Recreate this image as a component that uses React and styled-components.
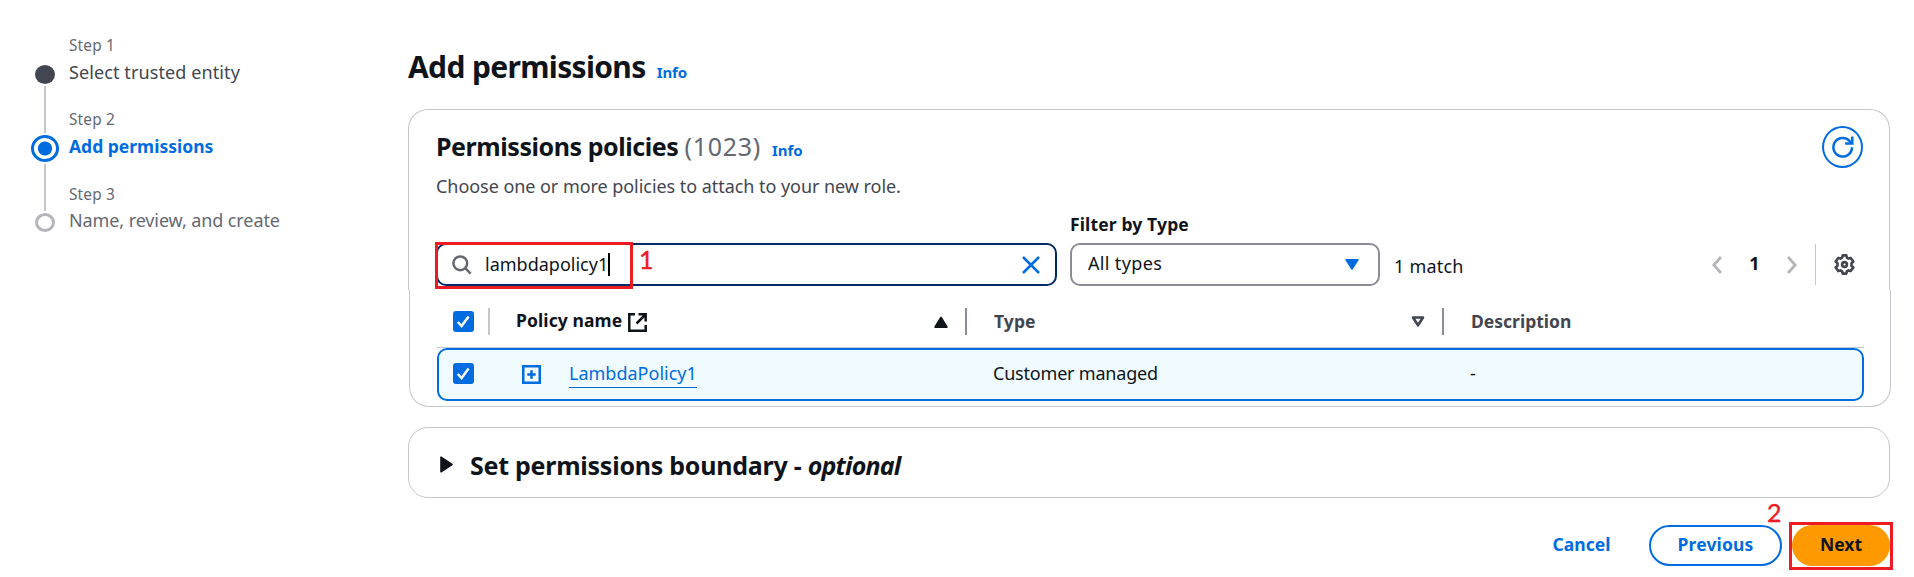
import React from 'react';
import styled, { createGlobalStyle, css } from 'styled-components';

const c = {
  text: '#0f141a',
  body: '#424650',
  muted: '#656871',
  blue: '#006ce0',
  line: '#c6c6cd',
  control: '#8c8c94',
  disabled: '#b4b4bb',
  focus: '#002b66',
  rowBg: '#f0fbff',
  orange: '#ff9900',
  mark: '#ed1c24',
};

const GlobalStyle = createGlobalStyle`
  *, *::before, *::after { box-sizing: border-box; }
  body {
    margin: 0;
    background: #fff;
    color: ${c.text};
    font: 18px/25px "Noto Sans", "Open Sans", sans-serif;
    overflow: hidden;
  }
  svg { display: block; flex: none; }
`;

const Page = styled.div`
  display: flex;
  width: 1914px;
  height: 577px;
  white-space: nowrap;
`;

/* Step navigation */
const Steps = styled.nav`
  display: flex;
  width: 408px;
  flex: none;
  padding-left: 31px;
`;
const Track = styled.div`
  display: flex;
  flex-direction: column;
  align-items: center;
  gap: 2px;
  width: 28px;
  padding-top: 65px;
`;
const Dot = styled.span`
  flex: none;
  border-radius: 50%;
  width: 20px;
  height: 19px;
  ${({ $state }) =>
    $state === 'done' && css`background: ${c.body};`}
  ${({ $state }) =>
    $state === 'todo' && css`border: 3px solid ${c.disabled};`}
  ${({ $state }) =>
    $state === 'active' &&
    css`
      width: 28px;
      height: 27px;
      border: 3px solid ${c.blue};
      background: radial-gradient(circle, ${c.blue} 6.6px, #fff 7.4px);
    `}
`;
const Connector = styled.span`
  flex: none;
  width: 2px;
  height: 47px;
  background: ${c.line};
`;
const StepList = styled.ol`
  list-style: none;
  margin: 0;
  padding: 35px 0 0 10px;
`;
const Step = styled.li`
  display: flex;
  flex-direction: column;
  gap: 2.5px;
  height: 74.4px;
`;
const StepLabel = styled.span`
  font-size: 15.4px;
  line-height: 22px;
  letter-spacing: 0.15px;
  color: ${c.muted};
`;
const StepTitle = styled.span`
  letter-spacing: ${({ $track }) => $track}px;
  color: ${({ $state }) =>
    ({ done: c.body, active: c.blue, todo: c.muted })[$state]};
  font-weight: ${({ $state }) => ($state === 'active' ? 700 : 400)};
  font-size: ${({ $state }) => ($state === 'active' ? 17.5 : 18)}px;
`;

/* Content */
const Main = styled.main`
  display: flex;
  flex-direction: column;
  width: 1482px;
  padding-top: 49px;
`;
const TitleRow = styled.header`
  display: flex;
  align-items: baseline;
  gap: 11px;
  height: 60px;
`;
const Title = styled.h1`
  margin: 0;
  font-size: 30px;
  line-height: 36px;
  letter-spacing: -0.65px;
`;
const Info = styled.a`
  font-size: 15px;
  font-weight: 700;
  line-height: 20px;
  letter-spacing: -0.1px;
  color: ${c.blue};
`;

const PanelHead = styled.section`
  display: flex;
  flex-direction: column;
  height: 181px;
  padding: 16px 25px 0 26px;
  border: 1px solid ${c.line};
  border-bottom: 0;
  border-radius: 20px 20px 0 0;
`;
const HeadRow = styled.div`
  display: flex;
  justify-content: space-between;
  height: 84px;
`;
const HeadText = styled.div`
  padding: 5px 0 0 1px;
`;
const HeadTitle = styled.div`
  display: flex;
  align-items: baseline;
  height: 43px;
`;
const SectionTitle = styled.h2`
  margin: 0;
  font-size: 25px;
  line-height: 30px;
  letter-spacing: ${({ $track }) => $track}px;
`;
const Optional = styled.em`
  letter-spacing: -0.8px;
`;
const Count = styled.span`
  margin: 0 11px 0 6px;
  font-size: 25px;
  line-height: 30px;
  letter-spacing: 0.75px;
  color: ${c.muted};
`;
const Description = styled.p`
  margin: 0;
  letter-spacing: -0.05px;
  color: ${c.body};
`;
const RefreshButton = styled.button`
  display: flex;
  align-items: center;
  justify-content: center;
  width: 41px;
  height: 42px;
  margin-right: 1px;
  padding: 0;
  border: 2px solid ${c.blue};
  border-radius: 50%;
  background: #fff;
`;

const Toolbar = styled.div`
  display: flex;
  align-items: flex-end;
  height: 76px;
  padding-left: 1px;
`;
const Control = styled.div`
  position: relative;
  display: flex;
  align-items: center;
  height: 43px;
  border: 2px solid ${({ $focused }) => ($focused ? c.focus : c.control)};
  border-radius: 10px;
  width: ${({ $focused }) => ($focused ? 621 : 310)}px;
  padding: ${({ $focused }) => ($focused ? '0 15px 0 14px' : '0 19px 0 16px')};
`;
const Query = styled.span`
  flex: 1;
  display: flex;
  align-items: center;
  margin-left: 13px;
  padding-bottom: 1px;
  &::after {
    content: '';
    width: 2px;
    height: 23px;
    background: #000;
  }
`;
const Field = styled.label`
  display: flex;
  flex-direction: column;
  gap: 6px;
  margin: 0 14px 0 13px;
`;
const FieldLabel = styled.span`
  font-size: 17.5px;
  font-weight: 700;
  letter-spacing: 0.14px;
`;
const Value = styled.span`
  flex: 1;
  letter-spacing: 0.35px;
  padding-bottom: 2px;
`;
const Matches = styled.span`
  flex: 1;
  letter-spacing: 0.2px;
  line-height: 40px;
`;
const Pager = styled.div`
  display: flex;
  align-items: center;
  height: 43px;
  padding-right: 9px;
`;
const PageNumber = styled.b`
  width: 65px;
  text-align: center;
  padding-bottom: 2px;
`;
const Rule = styled.span`
  width: 1px;
  height: 41px;
  margin: 0 18px;
  background: ${c.line};
`;

/* Callouts */
const Outline = styled.span`
  position: absolute;
  border: 3px solid ${c.mark};
  ${({ $target }) =>
    $target === 'search'
      ? css`left: -3px; top: -3px; width: 198px; height: 47px;`
      : css`inset: -3px -3px -4px;`}
`;
const Callout = styled.span`
  position: absolute;
  font: 25px/30px Lato, sans-serif;
  -webkit-text-stroke: 0.4px ${c.mark};
  color: ${c.mark};
  ${({ $target }) =>
    $target === 'search' ? css`left: 201px; top: -1px;` : css`left: -25px; top: -28px;`}
`;

/* Table */
const PanelTable = styled.section`
  height: 117px;
  margin: 0 -1px 20px 1px;
  padding: 0 26px 0 27px;
  border: 1px solid ${c.line};
  border-top: 0;
  border-radius: 0 0 20px 20px;
`;
const columns = css`
  display: grid;
  grid-template-columns: 53px 477px 477px 1fr;
  align-items: center;
`;
const HeaderRow = styled.div`
  ${columns}
  height: 58px;
  padding-top: 6px;
  border-bottom: 1px solid ${c.line};
`;
const HeaderCell = styled.div`
  display: flex;
  align-items: center;
  height: 27px;
  padding-left: ${({ $select, $sorted }) => ($select ? 16 : $sorted ? 26 : 27)}px;
  border-right: ${({ $divider }) => ($divider ? `2px solid ${$divider}` : 0)};
  color: ${({ $sorted }) => ($sorted ? c.text : c.body)};
  font-size: 17.5px;
  font-weight: 700;
`;
const HeaderLabel = styled.span`
  display: flex;
  flex: 1;
  gap: 6px;
  letter-spacing: ${({ $track }) => $track || 0}px;
  padding-bottom: ${({ $raised }) => ($raised ? 3 : 0)}px;
  & svg { margin-top: 5px; }
`;
const SortSlot = styled.span`
  padding-right: 17px;
`;
const SelectedRow = styled.div`
  ${columns}
  height: 53px;
  border: 2px solid ${c.blue};
  border-radius: 10px;
  background: ${c.rowBg};
  grid-template-columns: 51px 477px 477px 1fr;
`;
const Cell = styled.div`
  display: flex;
  align-items: center;
  height: 25px;
  margin-bottom: 3px;
  padding-left: ${({ $select }) => ($select ? 14 : 26)}px;
  letter-spacing: ${({ $tight }) => ($tight ? -0.2 : 0)}px;
`;
const ExpandSlot = styled.span`
  margin: 3px 28px 0 6px;
`;
const PolicyLink = styled.a`
  color: ${c.blue};
  height: 27px;
  margin-top: 2px;
  border-bottom: 1px solid ${c.blue};
`;

const Expander = styled.section`
  display: flex;
  align-items: center;
  gap: 17px;
  height: 71px;
  padding: 4px 0 0 31px;
  border: 1px solid ${c.line};
  border-radius: 20px;
`;

const Actions = styled.footer`
  display: flex;
  justify-content: flex-end;
  gap: 10px;
  margin-top: 27px;
`;
const Button = styled.button`
  position: relative;
  width: ${({ $width }) => $width}px;
  height: 41px;
  padding: 0 0 2px;
  border: 2px solid transparent;
  border-radius: 21px;
  background: transparent;
  color: ${c.blue};
  font: inherit;
  font-size: 17.5px;
  font-weight: 700;
  ${({ $kind }) =>
    $kind === 'normal' && css`border-color: ${c.blue}; letter-spacing: 0.15px;`}
  ${({ $kind }) =>
    $kind === 'primary' &&
    css`background: ${c.orange}; border: 0; color: ${c.text};`}
`;
const ActionSlot = styled.div`
  position: relative;
  height: 41px;
`;

const Checkbox = () => (
  <svg width="21" height="21" viewBox="0 0 21 21">
    <rect width="21" height="21" rx="3" fill={c.blue} />
    <path d="M4.8 11 8.6 15 15.6 5.4" fill="none" stroke="#fff" strokeWidth="2.5" />
  </svg>
);
const SearchIcon = () => (
  <svg width="20" height="20" viewBox="0 0 20 20" fill="none" stroke={c.muted} strokeWidth="2.5">
    <circle cx="8.3" cy="8.3" r="6.9" />
    <path d="m13.2 13.2 5.4 5.4" />
  </svg>
);
const CloseIcon = () => (
  <svg width="18" height="18" viewBox="0 0 18 18" stroke={c.blue} strokeWidth="2.5">
    <path d="m1 1 16 16M17 1 1 17" />
  </svg>
);
const RefreshIcon = () => (
  <svg width="22" height="22" viewBox="0 0 22 22" fill="none" stroke={c.blue} strokeWidth="2.5">
    <path d="M20 11.3a9.3 9.3 0 1 1-2.6-6.5L20 7.2" />
    <path d="M20.3.6v6.9h-7.2" />
  </svg>
);
const CaretDown = () => (
  <svg width="14" height="11" viewBox="0 0 14 11">
    <path d="M1 .8h12L7 10.2Z" fill={c.blue} stroke={c.blue} strokeWidth="1.4" strokeLinejoin="round" />
  </svg>
);
const SortUp = () => (
  <svg width="14" height="12" viewBox="0 0 14 12">
    <path d="M1.2 11h11.6L7 1.4Z" fill={c.text} stroke={c.text} strokeWidth="1.8" strokeLinejoin="round" />
  </svg>
);
const SortNone = () => (
  <svg width="14" height="11" viewBox="0 0 14 11">
    <path d="M2 1.5h10L7 9.3Z" fill="none" stroke={c.body} strokeWidth="2.6" strokeLinejoin="round" />
  </svg>
);
const CaretRight = () => (
  <svg width="13" height="17" viewBox="0 0 13 17">
    <path d="M1 1.2v14.6l11-7.3Z" fill={c.text} stroke={c.text} strokeWidth="1.6" strokeLinejoin="round" />
  </svg>
);
const Chevron = ({ d }) => (
  <svg width="10" height="18" viewBox="0 0 10 18" fill="none" stroke={c.disabled} strokeWidth="2.8">
    <path d={d} />
  </svg>
);
const GearIcon = () => (
  <svg width="21" height="21" viewBox="0 0 21 21" fill="none" stroke={c.body} strokeWidth="2.6" strokeLinejoin="round">
    <path d="M8.7 1.4h3.6l.6 2.3 1.5.9 2.3-.7 2.6 3.6-1.8 1.7v2.6l1.8 1.7-2.6 3.6-2.3-.7-1.5.9-.6 2.3H8.7l-.6-2.3-1.5-.9-2.3.7L1.7 13.5l1.8-1.7V9.2L1.7 7.5l2.6-3.6 2.3.7 1.5-.9Z" />
    <circle cx="10.5" cy="10.5" r="2.4" />
  </svg>
);
const ExternalIcon = () => (
  <svg width="19" height="19" viewBox="0 0 19 19" fill="none" stroke={c.text} strokeWidth="2.5">
    <path d="M7 1.3H1.3v16.4h16.4V12M10.5 1.3h7.2v7.2M17.5 1.5l-9 9" />
  </svg>
);
const PlusBox = () => (
  <svg width="19" height="19" viewBox="0 0 19 19" fill="none" stroke={c.blue} strokeWidth="2.5">
    <path d="M1.25 1.25h16.5v16.5H1.25ZM9.5 5.3v8.4M5.3 9.5h8.4" />
  </svg>
);

const steps = [
  { label: 'Step 1', title: 'Select trusted entity', state: 'done', track: 0.1 },
  { label: 'Step 2', title: 'Add permissions', state: 'active', track: 0 },
  { label: 'Step 3', title: 'Name, review, and create', state: 'todo', track: -0.1 },
];

export default function App() {
  return (
    <>
      <GlobalStyle />
      <Page>
        <Steps>
          <Track>
            <Dot $state="done" />
            <Connector />
            <Dot $state="active" />
            <Connector />
            <Dot $state="todo" />
          </Track>
          <StepList>
            {steps.map((s) => (
              <Step key={s.label}>
                <StepLabel>{s.label}</StepLabel>
                <StepTitle $state={s.state} $track={s.track}>{s.title}</StepTitle>
              </Step>
            ))}
          </StepList>
        </Steps>

        <Main>
          <TitleRow>
            <Title>Add permissions</Title>
            <Info>Info</Info>
          </TitleRow>

          <PanelHead>
            <HeadRow>
              <HeadText>
                <HeadTitle>
                  <SectionTitle $track={-0.44}>Permissions policies</SectionTitle>
                  <Count>(1023)</Count>
                  <Info>Info</Info>
                </HeadTitle>
                <Description>Choose one or more policies to attach to your new role.</Description>
              </HeadText>
              <RefreshButton aria-label="Refresh"><RefreshIcon /></RefreshButton>
            </HeadRow>
            <Toolbar>
              <Control $focused>
                <SearchIcon />
                <Query>lambdapolicy1</Query>
                <CloseIcon />
                <Outline $target="search" />
                <Callout $target="search">1</Callout>
              </Control>
              <Field>
                <FieldLabel>Filter by Type</FieldLabel>
                <Control>
                  <Value>All types</Value>
                  <CaretDown />
                </Control>
              </Field>
              <Matches>1 match</Matches>
              <Pager>
                <Chevron d="M9 1 1.8 9 9 17" />
                <PageNumber>1</PageNumber>
                <Chevron d="M1 1 8.2 9 1 17" />
                <Rule />
                <GearIcon />
              </Pager>
            </Toolbar>
          </PanelHead>

          <PanelTable>
            <HeaderRow>
              <HeaderCell $select $divider={c.line}><Checkbox /></HeaderCell>
              <HeaderCell $sorted $divider={c.control}>
                <HeaderLabel $raised $track={0.1}>Policy name <ExternalIcon /></HeaderLabel>
                <SortSlot><SortUp /></SortSlot>
              </HeaderCell>
              <HeaderCell $divider={c.control}>
                <HeaderLabel $track={0.1}>Type</HeaderLabel>
                <SortSlot><SortNone /></SortSlot>
              </HeaderCell>
              <HeaderCell><HeaderLabel>Description</HeaderLabel></HeaderCell>
            </HeaderRow>
            <SelectedRow>
              <Cell $select><Checkbox /></Cell>
              <Cell>
                <ExpandSlot><PlusBox /></ExpandSlot>
                <PolicyLink>LambdaPolicy1</PolicyLink>
              </Cell>
              <Cell $tight>Customer managed</Cell>
              <Cell>-</Cell>
            </SelectedRow>
          </PanelTable>

          <Expander>
            <CaretRight />
            <SectionTitle $track={-0.25}>
              Set permissions boundary - <Optional>optional</Optional>
            </SectionTitle>
          </Expander>

          <Actions>
            <Button $width={115}>Cancel</Button>
            <Button $kind="normal" $width={133}>Previous</Button>
            <ActionSlot>
              <Button $kind="primary" $width={98}>Next</Button>
              <Outline $target="next" />
              <Callout $target="next">2</Callout>
            </ActionSlot>
          </Actions>
        </Main>
      </Page>
    </>
  );
}
